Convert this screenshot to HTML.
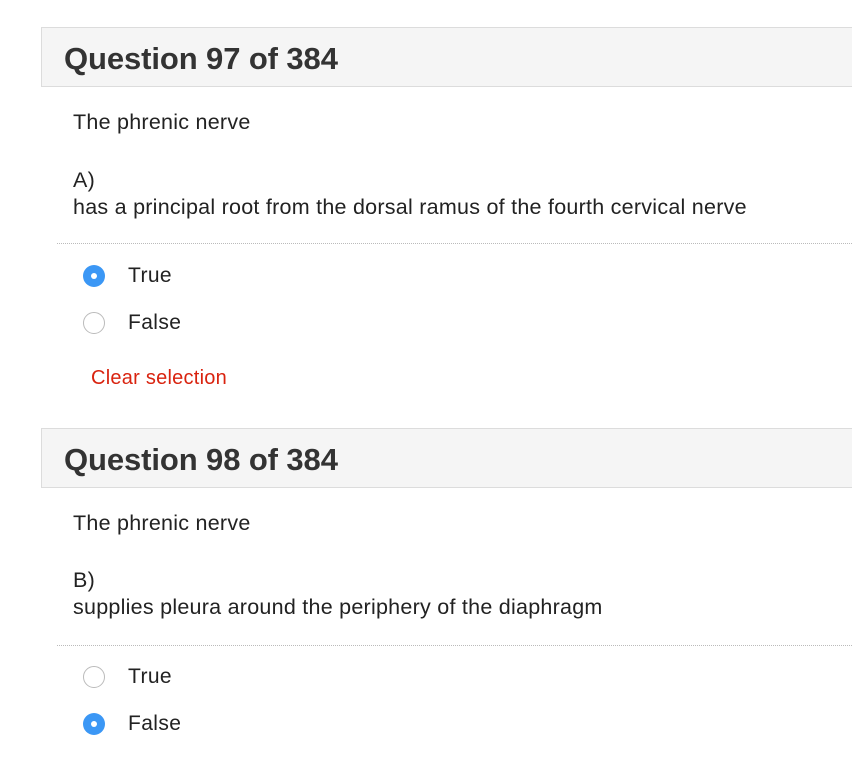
<!DOCTYPE html>
<html><head><style>
body{margin:0;background:#fff;font-family:"Liberation Sans",Arial,sans-serif;color:#222;width:852px;height:768px;overflow:hidden;position:relative}
.h{position:absolute;left:41px;width:830px;height:60px;background:#f5f5f5;border:1px solid #dcdcdc;box-sizing:border-box}
.h span{position:absolute;left:22px;top:13px;font-size:31px;font-weight:bold;color:#333;letter-spacing:-0.1px}
.t{position:absolute;left:73px;font-size:21.5px;white-space:nowrap;line-height:24px;letter-spacing:0.25px}
.d{position:absolute;left:57px;right:0;border-top:1px dotted #bbb}
.r{position:absolute;left:83px;width:22px;height:22px;border-radius:50%;box-sizing:border-box;border:1px solid #bbb;background:#fff}
.r.on{border:none;background:#3b97f5}
.r.on:after{content:"";position:absolute;left:8px;top:8px;width:6px;height:6px;border-radius:50%;background:#fff}
.l{position:absolute;left:128px;font-size:21px;line-height:24px;color:#222;letter-spacing:0.4px}
.c{position:absolute;left:91px;font-size:20px;color:#d9230f;line-height:24px;letter-spacing:0.25px}
</style></head><body>
<div class="h" style="top:27px"><span>Question 97 of 384</span></div>
<div class="t" style="top:110px">The phrenic nerve</div>
<div class="t" style="top:168px">A)</div>
<div class="t" style="top:195px">has a principal root from the dorsal ramus of the fourth cervical nerve</div>
<div class="d" style="top:243px"></div>
<div class="r on" style="top:265px"></div><div class="l" style="top:264px">True</div>
<div class="r" style="top:312px"></div><div class="l" style="top:311px">False</div>
<div class="c" style="top:366px">Clear selection</div>
<div class="h" style="top:428px"><span>Question 98 of 384</span></div>
<div class="t" style="top:511px">The phrenic nerve</div>
<div class="t" style="top:568px">B)</div>
<div class="t" style="top:595px">supplies pleura around the periphery of the diaphragm</div>
<div class="d" style="top:645px"></div>
<div class="r" style="top:666px"></div><div class="l" style="top:665px">True</div>
<div class="r on" style="top:713px"></div><div class="l" style="top:712px">False</div>
</body></html>
